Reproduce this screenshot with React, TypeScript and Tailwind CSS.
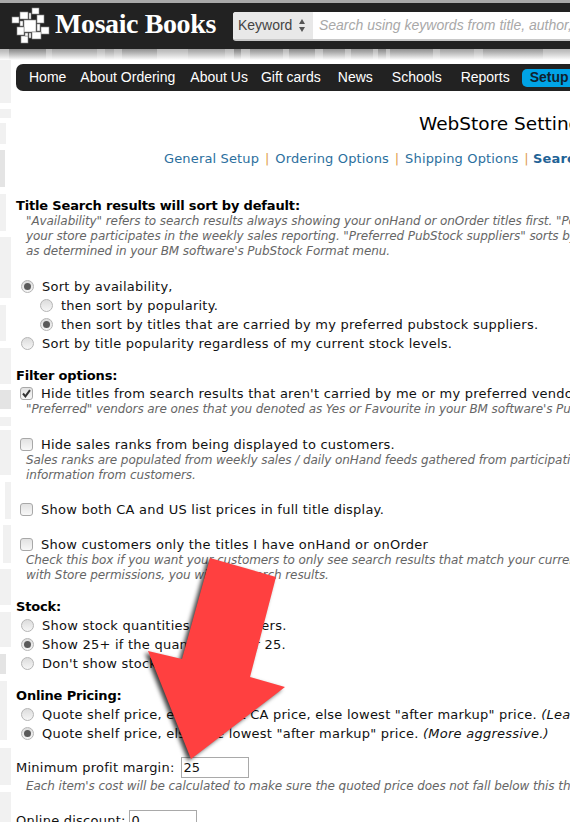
import React from 'react'

const verdana = 'font-["DejaVu_Sans",Verdana,sans-serif]'

const navItems = [
  { label: 'Home', cls: 'ml-[13px]' },
  { label: 'About Ordering', cls: 'ml-[14px]' },
  { label: 'About Us', cls: 'ml-[15px]' },
  { label: 'Gift cards', cls: 'ml-[13px]' },
  { label: 'News', cls: 'ml-[17px]' },
  { label: 'Schools', cls: 'ml-[19px]' },
  { label: 'Reports', cls: 'ml-[19px]' },
]

// faded mosaic blocks down the left edge of the page
const edgeBars = [
  'h-[43px] mb-[6px] w-[11px] bg-[#f1f1f1]',
  'h-[9px] mb-[5px] w-[11px] bg-[#f1f1f1]',
  'h-[21px] mb-[6px] w-[6px] bg-[#f1f1f1]',
  'h-[37px] mb-[7px] w-[5px] bg-[#e4e4e4]',
  'h-[37px] mb-[6px] w-[6px] bg-[#f1f1f1]',
  'h-[61px] mb-[7px] w-[11px] bg-[#f1f1f1]',
  'h-[36px] mb-[7px] w-[6px] bg-[#f1f1f1]',
  'h-[36px] mb-[6px] w-[11px] bg-[#f1f1f1]',
  'h-[19px] mb-[8px] w-[11px] bg-[#e4e4e4]',
  'h-[9px] mb-[4px] w-[11px] bg-[#f1f1f1]',
  'h-[45px] mb-[7px] w-[11px] bg-[#f1f1f1]',
  'h-[37px] mb-[6px] ml-[5px] w-[6px] bg-[#f1f1f1]',
  'h-[38px] mb-[6px] ml-[3px] w-[8px] bg-[#f1f1f1]',
  'h-[36px] mb-[7px] w-[11px] bg-[#f1f1f1]',
  'h-[35px] mb-[7px] w-[11px] bg-[#f1f1f1]',
  'h-[20px] mb-[7px] w-[6px] bg-[#e4e4e4]',
  'h-[59px] mb-[8px] w-[7px] bg-[#f1f1f1]',
  'h-[37px] mb-[7px] w-[11px] bg-[#f1f1f1]',
  'h-[30px] w-[11px] bg-[#f1f1f1]',
]

const shadowBlocks = [
  'w-[9px] bg-transparent',
  'w-[37px] bg-[#c4c4c4]',
  'w-[6px] bg-transparent',
  'w-[45px] bg-[#e2e2e2]',
  'w-[8px] bg-transparent',
  'w-[9px] bg-[#e2e2e2]',
  'w-[8px] bg-transparent',
  'w-[35px] bg-[#d0d0d0]',
  'w-[31px] bg-transparent',
  'w-[37px] bg-[#e2e2e2]',
  'w-[9px] bg-transparent',
  'w-[7px] bg-[#b8b8b8]',
  'w-[9px] bg-transparent',
  'w-[33px] bg-[#d0d0d0]',
  'w-[6px] bg-transparent',
  'w-[26px] bg-[#c4c4c4]',
  'w-[8px] bg-transparent',
  'w-[22px] bg-[#cfcfcf]',
  'w-[6px] bg-transparent',
  'w-[22px] bg-[#cfcfcf]',
  'w-[5px] bg-transparent',
  'w-[8px] bg-[#c4c4c4]',
  'w-[4px] bg-transparent',
  'w-[43px] bg-[#cfcfcf]',
  'w-[7px] bg-transparent',
  'w-[34px] bg-[#e2e2e2]',
  'w-[9px] bg-transparent',
  'w-[60px] bg-[#d8d8d8]',
]

function MosaicLogo() {
  const squares = [
    [24, 20, 12, 12],
    [12, 17, 7, 6],
    [20, 12, 8, 7],
    [32, 8, 7, 6],
    [37, 15, 7, 8],
    [41, 27, 8, 7],
    [32, 32, 9, 7],
    [21, 36, 7, 7],
    [17, 27, 7, 8],
    [29, 13, 2, 6],
    [25, 33, 3, 3],
    [29, 33, 2, 5],
    [37, 24, 3, 7],
    [20, 21, 3, 5],
  ]
  return (
    <svg width="50" height="44" viewBox="0 4 50 44" className="shrink-0">
      {squares.map(([x, y, w, h], i) => (
        <rect key={i} x={x} y={y} width={w} height={h} fill="#fff" stroke="#8a8a8a" strokeWidth="0.6" />
      ))}
    </svg>
  )
}

function Radio({ checked, nested }: { checked?: boolean; nested?: boolean }) {
  return (
    <span className={`flex h-[13px] w-[13px] shrink-0 items-center justify-center rounded-full border border-[#b5b5b5] bg-gradient-to-b from-[#dcdcdc] to-[#f6f6f6] ${nested ? 'ml-[24px] mr-[8px]' : 'ml-[5px] mr-[8px]'}`}>
      {checked && <span className="h-[7px] w-[7px] rounded-full bg-[#5a5a5a]" />}
    </span>
  )
}

function Check({ checked }: { checked?: boolean }) {
  return (
    <span className="ml-[4px] mr-[8px] flex h-[13px] w-[13px] shrink-0 items-center justify-center rounded-[3px] border border-[#a8a8a8] bg-gradient-to-b from-[#e2e2e2] to-[#f8f8f8]">
      {checked && (
        <svg width="11" height="11" viewBox="0 0 11 11">
          <path d="M2 5.5 L4.4 8.4 L9 2.2" fill="none" stroke="#333" strokeWidth="2" />
        </svg>
      )}
    </span>
  )
}

function Heading({ children, cls }: { children: React.ReactNode; cls: string }) {
  return <div className={`text-[13px] font-bold leading-[16px] tracking-[-0.17px] text-black ${cls}`}>{children}</div>
}

function Row({ children, cls = '' }: { children: React.ReactNode; cls?: string }) {
  return <div className={`flex h-[19px] items-center text-[13px] tracking-[0.24px] text-[#111] ${cls}`}>{children}</div>
}

function Note({ children, cls = '' }: { children: React.ReactNode; cls?: string }) {
  return <div className={`pl-[10px] text-[12px] italic leading-[15px] tracking-[-0.08px] text-[#666] ${cls}`}>{children}</div>
}

export default function App() {
  return (
    <div className={`relative h-[822px] w-[570px] overflow-hidden whitespace-nowrap bg-white ${verdana}`}>
      <header className="flex h-[49px] items-center border-t-[3px] border-[#a9a9a9] bg-[#222222]">
        <div className="flex items-center">
          <MosaicLogo />
          <span className='mb-[5px] ml-[5px] font-["Liberation_Serif",serif] text-[28px] font-bold leading-none tracking-[-0.4px] text-white'>Mosaic Books</span>
        </div>
        <div className="ml-[17px] flex h-[29px] flex-1 rounded-l-[3px] border-b-2 border-[#c8c8c8] bg-white font-['Liberation_Sans',sans-serif]">
          <div className="flex w-[80px] items-center rounded-l-[3px] bg-[#e8e8e8] pl-[5px] text-[14px] text-[#444]">
            Keyword
            <span className="ml-[7px] flex flex-col gap-[3px]">
              <span className="h-0 w-0 border-x-[3px] border-b-[5px] border-x-transparent border-b-[#555]" />
              <span className="h-0 w-0 border-x-[3px] border-t-[5px] border-x-transparent border-t-[#555]" />
            </span>
          </div>
          <div className="flex items-center pl-[6px] text-[14px] italic text-[#a8a8a8]">
            Search using keywords from title, author, subject
          </div>
        </div>
      </header>

      <div className="relative flex h-[11px]">
        {shadowBlocks.map((cls, i) => (
          <div key={i} className={`h-full shrink-0 ${cls}`} />
        ))}
        <div className="absolute inset-0 bg-gradient-to-b from-[#00000040] to-[#ffffff]" />
      </div>

      <div className="flex">
        <div className="flex w-[11px] shrink-0 flex-col">
          {edgeBars.map((cls, i) => (
            <div key={i} className={`shrink-0 ${cls}`} />
          ))}
        </div>

        <main className="min-w-0 flex-1 rounded-tl-[5px] bg-white pl-[5px] pt-[4px]">
          <nav className="flex h-[27px] items-center rounded-l-[7px] bg-[#222222] font-['Liberation_Sans',sans-serif] text-[14px] text-white">
            {navItems.map((item) => (
              <span key={item.label} className={item.cls}>{item.label}</span>
            ))}
            <span className="ml-[12px] flex h-[18px] flex-1 items-center rounded-l-[5px] bg-[#00a3e6] pl-[8px] font-bold text-[#10222e]">Setup</span>
          </nav>

          <h1 className="ml-[403px] mt-[22px] text-[18.5px] font-normal leading-[22px] text-black">WebStore Settings</h1>

          <div className="ml-[148px] mt-[15px] text-[13px] leading-[18px] tracking-[0.15px] text-[#2b6f9e]">
            General Setup <span className="mx-[1.5px] text-[#e0a050]">|</span> Ordering Options <span className="mx-[1.5px] text-[#e0a050]">|</span> Shipping Options <span className="ml-[1.5px] text-[#e0a050]">|</span> <b className="text-[#1f6396]">Search Options</b>
          </div>

          <Heading cls="mt-[30px]">Title Search results will sort by default:</Heading>
          <Note>"Availability" refers to search results always showing your onHand or onOrder titles first. "Popularity"</Note>
          <Note>your store participates in the weekly sales reporting. "Preferred PubStock suppliers" sorts by</Note>
          <Note>as determined in your BM software's PubStock Format menu.</Note>

          <Row cls="mt-[18px]"><Radio checked />Sort by availability,</Row>
          <Row><Radio nested />then sort by popularity.</Row>
          <Row><Radio nested checked />then sort by titles that are carried by my preferred pubstock suppliers.</Row>
          <Row><Radio />Sort by title popularity regardless of my current stock levels.</Row>

          <Heading cls="mt-[15px]">Filter options:</Heading>
          <Row><Check checked />Hide titles from search results that aren't carried by me or my preferred vendors</Row>
          <Note cls="-mt-[1px]">"Preferred" vendors are ones that you denoted as Yes or Favourite in your BM software's PubStock</Note>

          <Row cls="mt-[18px]"><Check />Hide sales ranks from being displayed to customers.</Row>
          <Note cls="-mt-[1px]">Sales ranks are populated from weekly sales / daily onHand feeds gathered from participating</Note>
          <Note>information from customers.</Note>

          <Row cls="mt-[17px]"><Check />Show both CA and US list prices in full title display.</Row>

          <Row cls="mt-[16px]"><Check />Show customers only the titles I have onHand or onOrder</Row>
          <Note cls="-mt-[1px]">Check this box if you want your customers to only see search results that match your current</Note>
          <Note>with Store permissions, you will still search results.</Note>

          <Heading cls="mt-[16px]">Stock:</Heading>
          <Row cls="mt-[1px]"><Radio />Show stock quantities to customers.</Row>
          <Row><Radio checked />Show 25+ if the quantity is over 25.</Row>
          <Row><Radio />Don't show stock quantities.</Row>

          <Heading cls="mt-[15px]">Online Pricing:</Heading>
          <Row cls="mt-[1px]"><Radio />Quote shelf price, else, lowest CA price, else lowest "after markup" price.&nbsp;<i>(Least aggressive.)</i></Row>
          <Row><Radio checked />Quote shelf price, else, the lowest "after markup" price.&nbsp;<i>(More aggressive.)</i></Row>

          <div className="mt-[14px] flex h-[21px] items-center text-[13px] tracking-[0.24px] text-[#111]">
            Minimum profit margin:
            <span className="ml-[6px] flex h-[21px] w-[68px] items-center border border-[#a9a9a9] pl-[2px] tracking-normal">25</span>
          </div>
          <Note cls="mt-[1px]">Each item's cost will be calculated to make sure the quoted price does not fall below this threshold.</Note>

          <div className="mt-[16px] flex h-[21px] items-center text-[13px] tracking-[0.24px] text-[#111]">
            Online discount:
            <span className="ml-[3px] flex h-[21px] w-[68px] items-center border border-[#a9a9a9] pl-[2px] tracking-normal">0</span>
          </div>
        </main>
      </div>

      {/* red call-out arrow pasted over the page */}
      <svg width="570" height="822" viewBox="0 0 570 822" className="pointer-events-none absolute left-0 top-0 drop-shadow-[-3px_2px_2px_rgba(0,0,0,0.75)]">
        <polygon points="210,558 276,577 250,677 285,687 191,759 148,651 182,659" fill="#ff4040" />
      </svg>
    </div>
  )
}
